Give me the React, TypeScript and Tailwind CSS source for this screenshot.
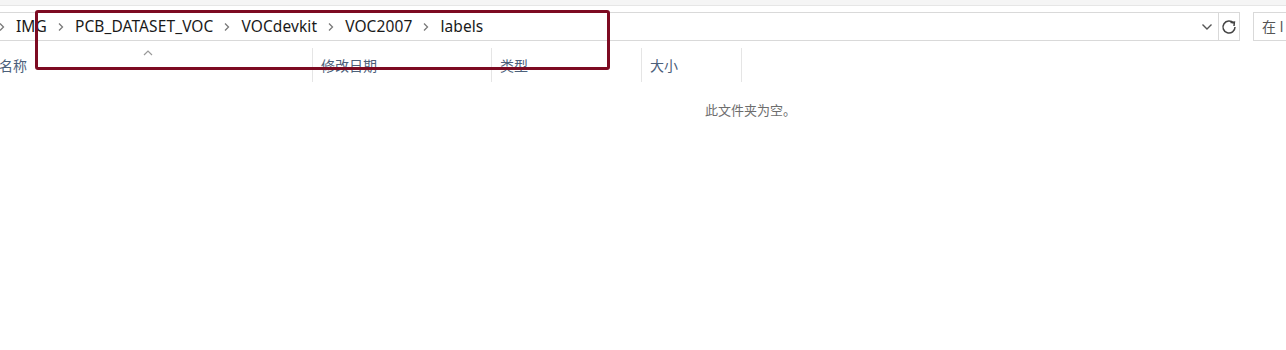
import React from 'react';

const Chevron = () => (
  <svg width="8" height="10" viewBox="0 0 8 10" className="shrink-0">
    <path d="M2 1.5 L5.5 5 L2 8.5" fill="none" stroke="#7a7a7a" strokeWidth="1.3" />
  </svg>
);

const crumbs = ['IMG', 'PCB_DATASET_VOC', 'VOCdevkit', 'VOC2007', 'labels'];

const columns = [
  { label: '名称', width: 'w-[312px]', pad: '-ml-[1px]' },
  { label: '修改日期', width: 'w-[179px]', pad: 'pl-[8px]' },
  { label: '类型', width: 'w-[150px]', pad: 'pl-[8px]' },
  { label: '大小', width: 'w-[100px]', pad: 'pl-[8px]' },
];

export default function App() {
  return (
    <div
      className="relative w-[1286px] h-[350px] overflow-hidden bg-white"
      style={{ fontFamily: '"Noto Sans", "Noto Sans CJK SC", sans-serif' }}
    >
      {/* top strip */}
      <div className="h-[6px] bg-[#f5f5f5] border-b border-[#e6e6e6]" />

      {/* address row */}
      <div className="mt-[6px] flex items-stretch h-[29px]">
        <div className="flex-1 flex items-center border border-l-0 border-[#d9d9d9] mr-[13px]">
          <div className="flex items-center gap-[10px] -ml-[2px] pt-[1px] text-[15.5px] tracking-[0.1px] text-[#1a1a1a]">
            {crumbs.map((c) => (
              <React.Fragment key={c}>
                <Chevron />
                <span className="leading-none">{c}</span>
              </React.Fragment>
            ))}
          </div>
          <div className="flex-1" />
          <div className="w-[22px] h-full flex items-center justify-center">
            <svg width="12" height="8" viewBox="0 0 12 8">
              <path d="M1.5 1.5 L6 6 L10.5 1.5" fill="none" stroke="#555" strokeWidth="1.4" />
            </svg>
          </div>
          <div className="w-[21px] h-full border-l border-[#d9d9d9] flex items-center justify-center">
            <svg width="16" height="16" viewBox="0 0 16 16">
              <path d="M12.6 4.2 A6 6 0 1 0 14 8" fill="none" stroke="#444" strokeWidth="1.5" />
              <path d="M9.5 3.6 L13.4 3.2 L13 7" fill="none" stroke="#444" strokeWidth="1.5" />
            </svg>
          </div>
        </div>
        <div className="w-[33px] border border-r-0 border-[#d9d9d9] flex items-center pl-[8px] text-[14px] text-[#555] whitespace-nowrap overflow-hidden">
          在 l
        </div>
      </div>

      {/* column header */}
      <div className="mt-[7px] flex h-[34px] text-[14px] text-[#4c607a]">
        {columns.map((col, i) => (
          <div
            key={col.label}
            className={`${col.width} relative flex items-center ${i > 0 ? 'border-l border-[#e5e5e5]' : ''}`}
          >
            <span className={col.pad}>{col.label}</span>
            {i === 0 && (
              <svg
                width="10"
                height="6"
                viewBox="0 0 10 6"
                className="absolute left-[143px] top-[2px]"
              >
                <path d="M1 5 L5 1 L9 5" fill="none" stroke="#9a9a9a" strokeWidth="1.2" />
              </svg>
            )}
          </div>
        ))}
        <div className="border-l border-[#e5e5e5]" />
      </div>

      {/* empty message */}
      <div className="mt-[19px] pl-[705px] text-[13px] text-[#6d6d6d]">此文件夹为空。</div>

      {/* highlight box */}
      <div className="absolute left-[35px] top-[10px] w-[575px] h-[60px] border-[3px] border-[#7d0b22] rounded-[3px]" />
    </div>
  );
}
